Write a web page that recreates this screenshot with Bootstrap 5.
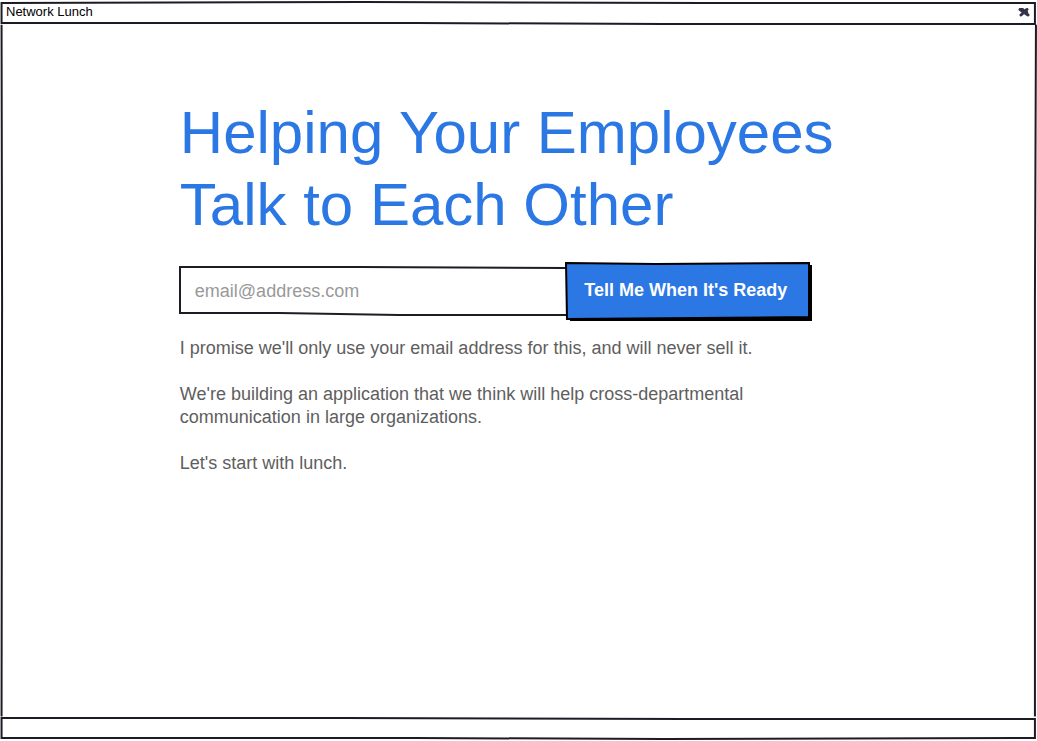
<!DOCTYPE html>
<html lang="en">
<head>
<meta charset="utf-8">
<meta name="viewport" content="width=device-width, initial-scale=1">
<title>Network Lunch</title>
<link href="https://cdn.jsdelivr.net/npm/bootstrap@5.3.0/dist/css/bootstrap.min.css" rel="stylesheet">
<style>
  body { font-family: "Liberation Sans", Arial, sans-serif; color: #5e5e5e; background: #fff; }
  .sketch { position: absolute; inset: 0; width: 100%; height: 100%; overflow: visible; pointer-events: none; }
  .sketch path { fill: none; stroke: #1c1c24; stroke-width: 2px; vector-effect: non-scaling-stroke; }
  .title-strip { height: 24px; padding: 0 7px 0 6px; }
  .window-title { font-size: 13px; line-height: 24px; color: #000; }
  .close-btn { line-height: 0; }
  .status-strip { height: 23px; }
  .pitch { padding: 73px 0 0 7px; }
  .headline { font-size: 60px; line-height: 72px; color: #2b78e4; margin-bottom: 22px; }
  .signup { max-width: 632px; margin-bottom: 18px; }
  .email-wrap { height: 48px; }
  .email-box { height: 48px; padding: 0 15px; font-size: 18px; border: 0; border-radius: 0; background: transparent; }
  .email-box:focus { background: transparent; box-shadow: none; }
  .email-box::placeholder { color: #999; opacity: 1; }
  .notify-btn { width: 246px; height: 56px; padding: 0 6px 2px 0; font-size: 18px; font-weight: 700; color: #fff; border: 0; }
  .notify-btn .fill { fill: #2b78e4; stroke: #000; }
  .notify-btn .shade { fill: #000; stroke: none; }
  .copy { max-width: 600px; font-size: 18px; line-height: 23px; }
  .copy p { margin-bottom: 23px; }
</style>
</head>
<body>
<div class="position-relative min-vh-100 d-flex flex-column">
  <header class="title-strip position-relative d-flex justify-content-between align-items-start">
    <svg class="sketch" viewBox="0 0 1000 24" preserveAspectRatio="none" aria-hidden="true">
      <path d="M1.5 3L350 2L680 3L998 3L998 24L640 24L400 23L1.5 23Z"/>
    </svg>
    <span class="window-title">Network Lunch</span>
    <button class="close-btn btn px-0 pt-2 pb-0 border-0" type="button" aria-label="Close">
      <svg width="12" height="10" viewBox="0 0 12 10" aria-hidden="true">
        <path d="M2 1.5L10 7M9 1.5L3 7M4 1L7 4M8 2L9 6" fill="none" stroke="#33334a" stroke-width="3" stroke-linecap="round"/>
      </svg>
    </button>
  </header>

  <main class="position-relative flex-grow-1 d-flex flex-column">
    <svg class="sketch" viewBox="0 0 1000 1000" preserveAspectRatio="none" aria-hidden="true">
      <path d="M1.5 1L2 400L1.5 998M999 1L998 400L998 998"/>
    </svg>
    <div class="row g-0">
      <div class="pitch col-8 offset-2">
        <h1 class="headline fw-normal">Helping Your Employees Talk to Each Other</h1>
        <form class="signup d-flex align-items-center">
          <div class="email-wrap position-relative flex-grow-1">
            <svg class="sketch" viewBox="0 0 388 48" preserveAspectRatio="none" aria-hidden="true">
              <path d="M388 1L180 0L0 0L0 46L100 46L220 48L388 48"/>
            </svg>
            <input class="email-box form-control" id="email" type="email" aria-label="Email address" placeholder="email@address.com">
          </div>
          <button class="notify-btn btn rounded-0 position-relative flex-shrink-0" type="submit">
            <svg class="sketch" viewBox="0 0 246 56" preserveAspectRatio="none" aria-hidden="true">
              <path class="shade" d="M4 4L246 2L246 58L4 58Z"/>
              <path class="fill" d="M0 0L90 1L243 0L243 54L130 55L1 56Z"/>
            </svg>
            <span class="position-relative">Tell Me When It's Ready</span>
          </button>
        </form>
        <div class="copy">
          <p>I promise we'll only use your email address for this, and will never sell it.</p>
          <p>We're building an application that we think will help cross-departmental communication in large organizations.</p>
          <p>Let's start with lunch.</p>
        </div>
      </div>
    </div>
  </main>

  <footer class="status-strip position-relative">
    <svg class="sketch" viewBox="0 0 1000 23" preserveAspectRatio="none" aria-hidden="true">
      <path d="M1.5 0L330 0L660 1L998 1L998 20L640 21L400 20L1.5 20Z"/>
    </svg>
  </footer>
</div>
<script src="https://cdn.jsdelivr.net/npm/bootstrap@5.3.0/dist/js/bootstrap.bundle.min.js"></script>
</body>
</html>
